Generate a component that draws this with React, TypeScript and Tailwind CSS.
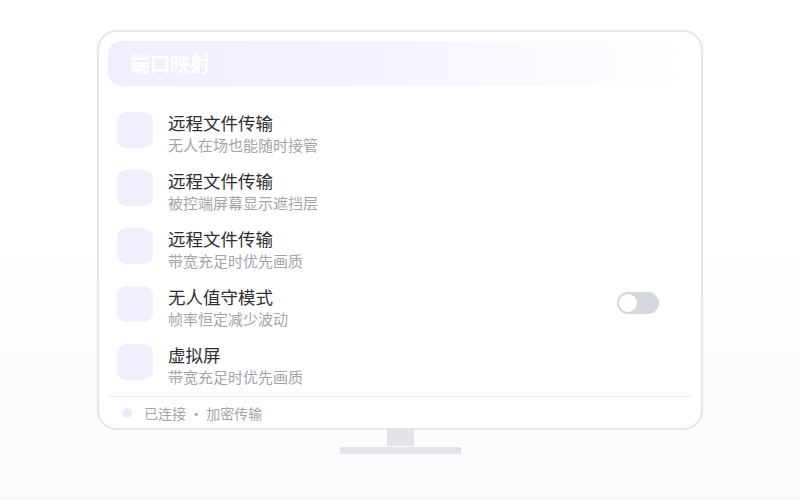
import React from "react";

const rows = [
  { title: "远程文件传输", sub: "无人在场也能随时接管", toggle: false },
  { title: "远程文件传输", sub: "被控端屏幕显示遮挡层", toggle: false },
  { title: "远程文件传输", sub: "带宽充足时优先画质", toggle: false },
  { title: "无人值守模式", sub: "帧率恒定减少波动", toggle: true },
  { title: "虚拟屏", sub: "带宽充足时优先画质", toggle: false },
];

export default function App() {
  return (
    <div
      className="w-full h-[500px] flex flex-col items-center pt-[30px] bg-gradient-to-b from-white via-white via-45% to-[#fafafc]"
      style={{ fontFamily: '"Noto Sans CJK SC", "Noto Sans", sans-serif' }}
    >
      <div className="w-[606px] h-[400px] rounded-[20px] border-2 border-[#e4e6ea] bg-white pt-[9px] px-[9px] flex flex-col">
        <div className="h-[45px] shrink-0 rounded-[14px] bg-gradient-to-r from-[#f1eefe] via-[#f6f4ff] to-white flex items-center pl-[22px] pr-[17px]">
          <span className="text-[20px] leading-none font-semibold text-white">端口映射</span>
          <div className="ml-auto flex gap-[6px]">
            <span className="w-3 h-3 rounded-full bg-white" />
            <span className="w-3 h-3 rounded-full bg-white" />
            <span className="w-3 h-3 rounded-full bg-white" />
          </div>
        </div>
        <div className="mt-[26px] flex flex-col gap-[15px]">
          {rows.map((r, i) => (
            <div key={i} className="flex items-start pl-[9px] pr-[33px]">
              <div className="w-9 h-9 rounded-[9px] bg-[#f2eefe] shrink-0" />
              <div className="ml-[15px] flex flex-col">
                <span className="text-[17.5px] leading-[22px] text-[#2e2e33]">{r.title}</span>
                <span className="text-[15px] leading-[21px] text-[#a3a5ad]">{r.sub}</span>
              </div>
              {r.toggle && (
                <div className="ml-auto mt-[6px] w-[42px] h-[22px] rounded-full bg-[#d5d8de] p-[2px] flex items-center">
                  <span className="w-[18px] h-[18px] rounded-full bg-white" />
                </div>
              )}
            </div>
          ))}
        </div>
        <div className="mt-[9px] border-t border-[#eceef1]" />
        <div className="flex-1 flex items-center pl-[14px]">
          <span className="w-[10px] h-[10px] rounded-full bg-[#eeeafd]" />
          <span className="ml-[12px] text-[14px] leading-none text-[#a3a5ad]">已连接 · 加密传输</span>
        </div>
      </div>
      <div className="w-[27px] h-[16px] bg-[#e2e4e8]" />
      <div className="mt-[1px] w-[121px] h-[7px] bg-[#e2e4e8]" />
    </div>
  );
}
